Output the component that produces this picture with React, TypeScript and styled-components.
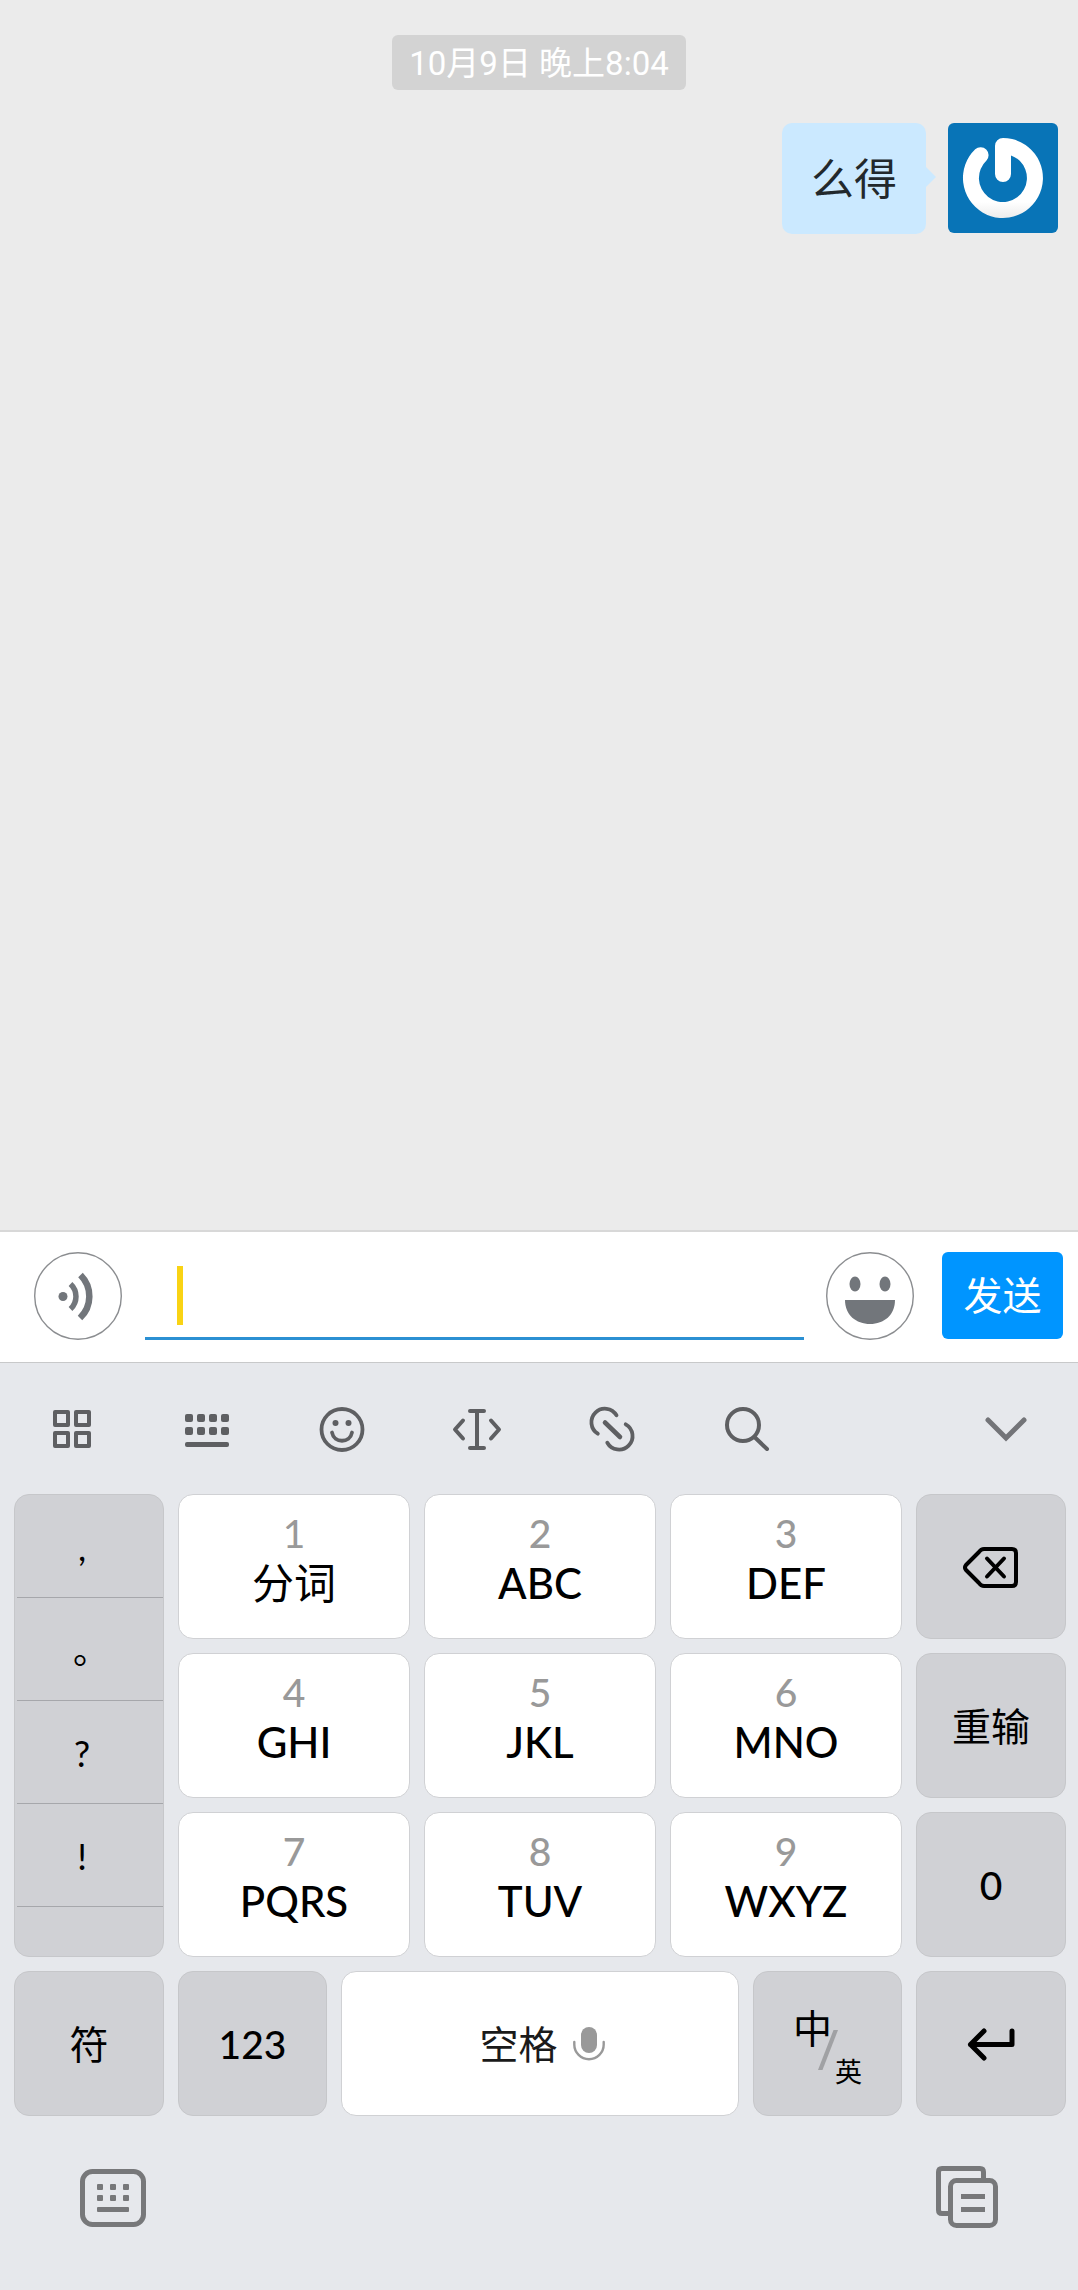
import React from 'react';
import styled, { createGlobalStyle } from 'styled-components';

const GlobalStyle = createGlobalStyle`
  * { box-sizing: border-box; }
  html, body { margin: 0; height: 100%; }
  #root { height: 100%; }
  body { background: #ebebeb; font-family: Roboto, 'Noto Sans CJK SC', sans-serif; }
  button, input { font-family: inherit; margin: 0; padding: 0; border: 0; background: none; }
  svg { display: block; flex: none; }
`;

const Screen = styled.div`
  min-height: 100%;
  display: flex;
  flex-direction: column;
`;

const Chat = styled.main`
  flex: 1;
  display: flex;
  flex-direction: column;
  padding: 35px 20px 0;
`;

const TimeStamp = styled.time`
  align-self: center;
  padding: 2px 17px 0;
  border-radius: 6px;
  background: #d3d3d3;
  color: #fff;
  font-size: 33px;
  line-height: 53px;
`;

const Message = styled.div`
  display: flex;
  justify-content: flex-end;
  gap: 22px;
  margin-top: 33px;
`;

const Bubble = styled.p`
  position: relative;
  margin: 0;
  padding: 4px 29px 0;
  border-radius: 10px;
  background: #cbe9ff;
  color: #22282c;
  font-size: 43px;
  line-height: 107px;

  &::after {
    content: '';
    position: absolute;
    left: 100%;
    top: 44px;
    border-left: 10px solid #cbe9ff;
    border-top: 10px solid transparent;
    border-bottom: 10px solid transparent;
  }
`;

const Avatar = styled.div`
  width: 110px;
  height: 110px;
  border-radius: 6px;
  background: #0874b7;
  overflow: hidden;
`;

const Composer = styled.form`
  display: flex;
  align-items: flex-start;
  padding: 20px 15px 22px 34px;
  border-top: 2px solid #d8d8d8;
  border-bottom: 1px solid #c8c9ca;
  background: #fff;
`;

const IconButton = styled.button`
  display: block;
  flex: none;
`;

const Field = styled.label`
  flex: 1;
  min-width: 0;
  height: 88px;
  display: flex;
  align-items: center;
  margin: 0 22px 0 23px;
  padding: 2px 0 0 32px;
  border-bottom: 3px solid #2b90d3;
`;

const Caret = styled.span`
  width: 6px;
  height: 59px;
  background: #f9d314;
`;

const TextBox = styled.input`
  flex: 1;
  min-width: 0;
  height: 59px;
  font-size: 43px;
  outline: none;
  caret-color: #f9d314;
`;

const SendButton = styled.button`
  width: 121px;
  margin-left: 28px;
  padding-top: 4px;
  border-radius: 6px;
  background: #0095ff;
  color: #fff;
  font-size: 39px;
  line-height: 83px;
`;

const Keyboard = styled.section`
  background: #e6e8ec;
`;

const Tools = styled.div`
  display: flex;
  height: 131px;
  padding: 0 5px 0 4px;
`;

const Tool = styled.button<{ $last?: boolean }>`
  width: 135px;
  display: flex;
  align-items: center;
  justify-content: center;
  margin-left: ${(p) => (p.$last ? 'auto' : '0')};
`;

const KeyGrid = styled.div`
  display: grid;
  grid-template-columns: 150fr 232fr 232fr 232fr 150fr;
  grid-auto-rows: 145px;
  gap: 14px;
  padding: 0 12px 0 14px;
`;

const BottomKeys = styled(KeyGrid)`
  grid-template-columns: 150fr 149fr 398fr 149fr 150fr;
  margin-top: 14px;
`;

const Key = styled.button<{ $dark?: boolean; $latin?: boolean }>`
  display: flex;
  align-items: center;
  justify-content: center;
  min-width: 0;
  border: 1px solid ${(p) => (p.$dark ? '#c6c7ca' : '#d0d1d4')};
  border-radius: 15px;
  background: ${(p) => (p.$dark ? '#d0d1d5' : '#fff')};
  color: #000;
  font-family: Lato, 'Noto Sans CJK SC', sans-serif;
  font-size: 39px;
  font-weight: ${(p) => (p.$latin ? 500 : 400)};
  line-height: 56px;
`;

const LetterKey = styled(Key)`
  flex-direction: column;
  justify-content: flex-start;
  padding-top: 16px;
`;

const Digit = styled.span`
  color: #999;
  font-size: 39px;
  line-height: 44px;
`;

const Letters = styled.span`
  font-size: 42px;
  line-height: 56px;
`;

const Punctuation = styled.div`
  grid-row: span 3;
  display: flex;
  flex-direction: column;
  border: 1px solid #c6c7ca;
  border-radius: 15px;
  background: #d0d1d5;
  overflow: hidden;
  padding-left: 2px;
`;

const Mark = styled.button`
  height: 103px;
  flex: none;
  padding: 2px 16px 0 0;
  border-bottom: 1px solid #a6a7ab;
  color: #000;
  font-family: Lato, 'Noto Sans CJK SC', sans-serif;
  font-feature-settings: 'halt';
  font-size: 36px;
  line-height: 100px;
  text-align: center;
`;

const SpaceLabel = styled.span`
  margin: 0 15px 0 4px;
  color: #1a1a1a;
`;

const Language = styled.span`
  display: flex;
  align-items: flex-start;
  padding-top: 7px;
`;

const Chinese = styled.span`
  font-size: 39px;
  line-height: 40px;
`;

const Slash = styled.svg`
  margin: 22px 0 0 -14px;
`;

const English = styled.span`
  margin: 50px 0 0 -3px;
  font-size: 27px;
  line-height: 28px;
`;

const Footer = styled.div`
  display: flex;
  align-items: center;
  justify-content: space-between;
  padding: 50px 80px 62px;
`;

const GREY = '#5e5f62';

const AvatarArt = () => (
  <svg width="110" height="110" viewBox="0 0 110 110" aria-hidden="true">
    <defs>
      <linearGradient id="ring" x1="0" y1="0" x2="0" y2="1">
        <stop offset="0.8" stopColor="#fff" />
        <stop offset="1" stopColor="#ececec" />
      </linearGradient>
    </defs>
    <path
      d="M47 23A8 8 0 0 1 55 15A40 40 0 1 1 27.2 26.2A8 8 0 0 1 38.5 37.5A24 24 0 1 0 63 32.4V51A8 8 0 0 1 47 51Z"
      fill="url(#ring)"
    />
  </svg>
);

const VoiceIcon = () => (
  <svg width="88" height="88" viewBox="0 0 88 88" fill="none" aria-hidden="true">
    <circle cx="44" cy="44" r="43.3" stroke="#8b8d90" strokeWidth="1.4" />
    <circle cx="29" cy="44.5" r="4.5" fill="#72767b" />
    <path d="M36.500 32A17 17 0 0 1 36.500 57" stroke="#72767b" strokeWidth="5.5" />
    <path d="M46.500 23A30 30 0 0 1 46 66" stroke="#72767b" strokeWidth="6.5" />
  </svg>
);

const GrinIcon = () => (
  <svg width="88" height="88" viewBox="0 0 88 88" aria-hidden="true">
    <circle cx="44" cy="44" r="43.3" fill="none" stroke="#8b8d90" strokeWidth="1.4" />
    <ellipse cx="29" cy="32" rx="5.5" ry="7.5" fill="#72767b" />
    <ellipse cx="59" cy="32" rx="5.5" ry="7.5" fill="#72767b" />
    <path d="M19 48H69C69 63 58 72 44 72C30 72 19 63 19 48Z" fill="#72767b" />
  </svg>
);

const GridIcon = () => (
  <svg width="48" height="48" viewBox="0 0 48 48" fill="none" stroke={GREY} strokeWidth="4" strokeLinejoin="round" aria-hidden="true">
    <rect x="7" y="7" width="13" height="13" />
    <rect x="28" y="7" width="13" height="13" />
    <rect x="7" y="28" width="13" height="13" />
    <rect x="28" y="28" width="13" height="13" />
  </svg>
);

const KeysIcon = () => (
  <svg width="48" height="48" viewBox="0 0 48 48" fill={GREY} aria-hidden="true">
    {[9, 22].map((y) => [2, 14, 26, 38].map((x) => <rect key={`${x}-${y}`} x={x} y={y} width="8" height="8" rx="2" />))}
    <rect x="2" y="37" width="44" height="5" rx="2" />
  </svg>
);

const SmileIcon = () => (
  <svg width="48" height="48" viewBox="0 0 48 48" fill="none" stroke={GREY} strokeWidth="3.8" strokeLinecap="round" aria-hidden="true">
    <circle cx="24" cy="24.5" r="20.5" />
    <circle cx="17.5" cy="18" r="3" fill={GREY} stroke="none" />
    <circle cx="30.5" cy="18" r="3" fill={GREY} stroke="none" />
    <path d="M14 27.500C16 38.500 32 38.500 34 27.500" />
  </svg>
);

const CursorIcon = () => (
  <svg width="50" height="48" viewBox="0 0 50 48" fill="none" stroke={GREY} strokeWidth="4" strokeLinecap="round" strokeLinejoin="round" aria-hidden="true">
    <path d="M18 6H32M25 6V43M18 43H32M11 15.500L3 24.500L11 33.500M39 15.500L47 24.500L39 33.500" />
  </svg>
);

const LinkIcon = () => (
  <svg width="48" height="48" viewBox="0 0 48 48" fill="none" stroke={GREY} strokeWidth="3.8" strokeLinecap="round" aria-hidden="true">
    <path d="M9.800 28.700A13.500 13.500 0 1 1 28.500 10.300M37.700 19.300A13.500 13.500 0 1 1 19.300 37.700" />
    <path d="M17 17.500L32 32" strokeWidth="4.6" />
  </svg>
);

const SearchIcon = () => (
  <svg width="48" height="48" viewBox="0 0 48 48" fill="none" stroke={GREY} strokeWidth="4" strokeLinecap="round" aria-hidden="true">
    <circle cx="20" cy="20" r="16" />
    <path d="M32 32.500L44 44" />
  </svg>
);

const ChevronIcon = () => (
  <svg width="48" height="48" viewBox="0 0 48 48" fill="none" stroke="#737478" strokeWidth="5" strokeLinecap="round" aria-hidden="true">
    <path d="M6 15L24 33L42 15" />
  </svg>
);

const BackspaceIcon = () => (
  <svg width="56" height="42" viewBox="2 0 56 42" fill="none" stroke="#000" strokeWidth="4" strokeLinecap="round" strokeLinejoin="round" aria-hidden="true">
    <path d="M23 3H51Q55 3 55 7V36Q55 40 51 40H23Q20 40 18 37L5 24Q3 21.500 5 19L18 6Q20 3 23 3Z" />
    <path d="M26 12.500L43 30.500M43 12.500L26 30.500" />
  </svg>
);

const EnterIcon = () => (
  <svg width="48" height="34" viewBox="0 0 48 34" fill="none" stroke="#000" strokeWidth="5" strokeLinecap="round" strokeLinejoin="round" aria-hidden="true">
    <path d="M17 4L3.500 17.500L17 31M3.500 17.500H45V4" />
  </svg>
);

const MicIcon = () => (
  <svg width="32" height="34" viewBox="0 0 32 34" fill="none" aria-hidden="true">
    <rect x="8" y="0" width="16" height="26" rx="8" fill="#999" />
    <path d="M1.300 15V17.500A14.700 14.700 0 0 0 30.700 17.500V15" stroke="#999" strokeWidth="2.4" strokeLinecap="round" />
  </svg>
);

const HideKeyboardIcon = () => (
  <svg width="66" height="62" viewBox="0 0 66 62" fill="#77787a" aria-hidden="true">
    <rect x="2.5" y="5.5" width="61" height="53" rx="10" fill="none" stroke="#77787a" strokeWidth="5" />
    {[18, 29].map((y) => [17, 30, 43].map((x) => <rect key={`${x}-${y}`} x={x} y={y} width="6" height="6" rx="1" />))}
    <rect x="17" y="41" width="32" height="5" rx="1" />
  </svg>
);

const ClipboardIcon = () => (
  <svg width="62" height="62" viewBox="0 0 62 62" fill="none" stroke="#77787a" strokeWidth="5" aria-hidden="true">
    <path d="M14 47.500H6Q2.500 47.500 2.500 44V6Q2.500 2.500 6 2.500H44Q47.500 2.500 47.500 6V14" />
    <rect x="14.5" y="14.5" width="45" height="45" rx="6" />
    <path d="M25 30.500H49M25 43.500H49" />
  </svg>
);

const tools = [
  { name: '菜单', Icon: GridIcon },
  { name: '键盘', Icon: KeysIcon },
  { name: '表情', Icon: SmileIcon },
  { name: '光标', Icon: CursorIcon },
  { name: '链接', Icon: LinkIcon },
  { name: '搜索', Icon: SearchIcon },
];

const rows = [
  { keys: [['1', '分词'], ['2', 'ABC'], ['3', 'DEF']], side: <BackspaceIcon />, name: '删除' },
  { keys: [['4', 'GHI'], ['5', 'JKL'], ['6', 'MNO']], side: '重输', name: '重输' },
  { keys: [['7', 'PQRS'], ['8', 'TUV'], ['9', 'WXYZ']], side: '0', name: '0' },
];

export default function App() {
  return (
    <Screen>
      <GlobalStyle />
      <Chat>
        <TimeStamp>10月9日 晚上8:04</TimeStamp>
        <Message>
          <Bubble>么得</Bubble>
          <Avatar>
            <AvatarArt />
          </Avatar>
        </Message>
      </Chat>

      <Composer onSubmit={(e) => e.preventDefault()}>
        <IconButton type="button" aria-label="语音">
          <VoiceIcon />
        </IconButton>
        <Field>
          <Caret />
          <TextBox type="text" aria-label="消息" />
        </Field>
        <IconButton type="button" aria-label="表情">
          <GrinIcon />
        </IconButton>
        <SendButton type="submit">发送</SendButton>
      </Composer>

      <Keyboard>
        <Tools>
          {tools.map(({ name, Icon }) => (
            <Tool key={name} type="button" aria-label={name}>
              <Icon />
            </Tool>
          ))}
          <Tool $last type="button" aria-label="收起">
            <ChevronIcon />
          </Tool>
        </Tools>

        <KeyGrid>
          <Punctuation>
            {[',', '。', '?', '!'].map((mark) => (
              <Mark key={mark} type="button">
                {mark}
              </Mark>
            ))}
          </Punctuation>
          {rows.map((row) => (
            <React.Fragment key={row.name}>
              {row.keys.map(([digit, letters]) => (
                <LetterKey key={digit} type="button" $latin={digit !== '1'}>
                  <Digit>{digit}</Digit>
                  <Letters>{letters}</Letters>
                </LetterKey>
              ))}
              <Key $dark $latin={row.name === '0'} type="button" aria-label={row.name}>
                {row.side}
              </Key>
            </React.Fragment>
          ))}
        </KeyGrid>

        <BottomKeys>
          <Key $dark type="button">符</Key>
          <Key $dark $latin type="button">123</Key>
          <Key type="button">
            <SpaceLabel>空格</SpaceLabel>
            <MicIcon />
          </Key>
          <Key $dark type="button">
            <Language>
              <Chinese>中</Chinese>
              <Slash width="20" height="40" viewBox="0 0 20 40" aria-hidden="true">
                <path d="M15.500 0H20L4.500 40H0Z" fill="#a0a1a4" />
              </Slash>
              <English>英</English>
            </Language>
          </Key>
          <Key $dark type="button" aria-label="换行">
            <EnterIcon />
          </Key>
        </BottomKeys>

        <Footer>
          <IconButton type="button" aria-label="隐藏键盘">
            <HideKeyboardIcon />
          </IconButton>
          <IconButton type="button" aria-label="剪贴板">
            <ClipboardIcon />
          </IconButton>
        </Footer>
      </Keyboard>
    </Screen>
  );
}
